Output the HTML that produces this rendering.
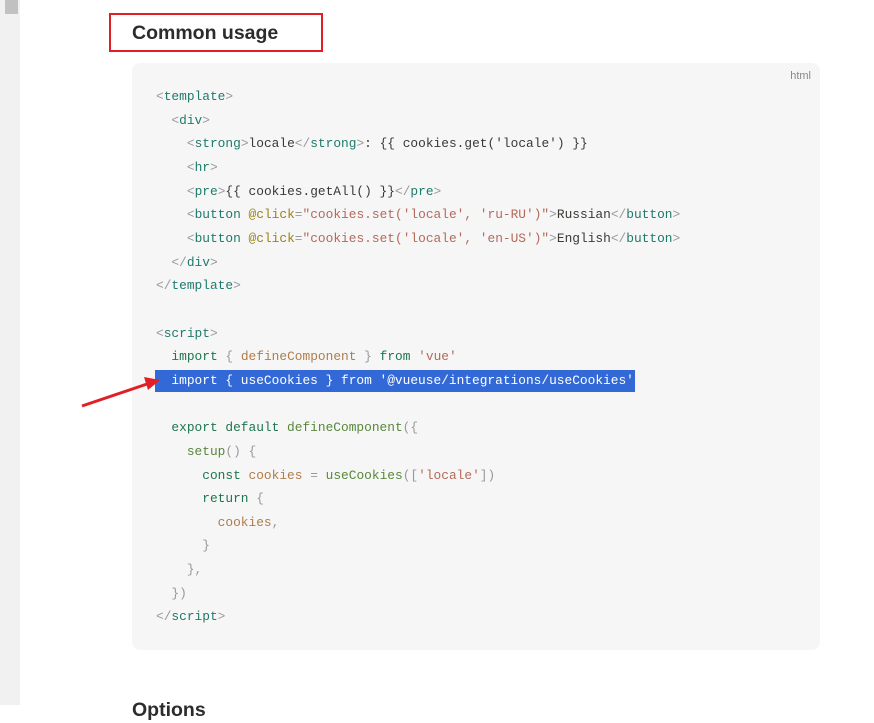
<!DOCTYPE html>
<html><head><meta charset="utf-8"><style>
body{margin:0;width:874px;height:705px;background:#fff;position:relative;overflow:hidden;font-family:"Liberation Sans",sans-serif}
.sb{position:absolute;left:0;top:0;width:20px;height:705px;background:#f1f1f1}
.th{position:absolute;left:5px;top:0;width:13px;height:14px;background:#c1c1c1}
.box{position:absolute;left:109px;top:13px;width:210px;height:35px;border:2px solid #e31e24}
h2{position:absolute;left:132px;top:20px;margin:0;font-size:19.5px;font-weight:600;color:#2c2c2c;line-height:26px}
h2.o{top:697px}
.code{position:absolute;left:132px;top:63px;width:688px;height:587px;background:#f6f6f7;border-radius:8px}
.lang{position:absolute;right:9px;top:7px;font-size:11px;color:#888}
pre{position:absolute;left:24px;top:22px;margin:0;font-family:"Liberation Mono",monospace;font-size:12.85px;line-height:23.65px;color:#393a34}
.p{color:#999}.t{color:#1e7a6c}.k{color:#1e754f}.s{color:#b56959}.a{color:#998418}.v{color:#b07d48}.f{color:#59873a}
.hl{background:#3369d6;color:#fff;display:inline-block;margin-left:-1px;padding:0 1px;line-height:22px}
</style></head><body>
<div class="sb"><div class="th"></div></div>
<div class="box"></div>
<h2>Common usage</h2>
<div class="code"><div class="lang">html</div>
<pre><span class="p">&lt;</span><span class="t">template</span><span class="p">&gt;</span>
  <span class="p">&lt;</span><span class="t">div</span><span class="p">&gt;</span>
    <span class="p">&lt;</span><span class="t">strong</span><span class="p">&gt;</span>locale<span class="p">&lt;/</span><span class="t">strong</span><span class="p">&gt;</span>: {{ cookies.get('locale') }}
    <span class="p">&lt;</span><span class="t">hr</span><span class="p">&gt;</span>
    <span class="p">&lt;</span><span class="t">pre</span><span class="p">&gt;</span>{{ cookies.getAll() }}<span class="p">&lt;/</span><span class="t">pre</span><span class="p">&gt;</span>
    <span class="p">&lt;</span><span class="t">button</span> <span class="a">@click</span><span class="p">=</span><span class="s">"cookies.set('locale', 'ru-RU')"</span><span class="p">&gt;</span>Russian<span class="p">&lt;/</span><span class="t">button</span><span class="p">&gt;</span>
    <span class="p">&lt;</span><span class="t">button</span> <span class="a">@click</span><span class="p">=</span><span class="s">"cookies.set('locale', 'en-US')"</span><span class="p">&gt;</span>English<span class="p">&lt;/</span><span class="t">button</span><span class="p">&gt;</span>
  <span class="p">&lt;/</span><span class="t">div</span><span class="p">&gt;</span>
<span class="p">&lt;/</span><span class="t">template</span><span class="p">&gt;</span>

<span class="p">&lt;</span><span class="t">script</span><span class="p">&gt;</span>
  <span class="k">import</span> <span class="p">{</span> <span class="v">defineComponent</span> <span class="p">}</span> <span class="k">from</span> <span class="s">'vue'</span>
<span class="hl">  import { useCookies } from '@vueuse/integrations/useCookies'</span>

  <span class="k">export default</span> <span class="f">defineComponent</span><span class="p">({</span>
    <span class="f">setup</span><span class="p">() {</span>
      <span class="k">const</span> <span class="v">cookies</span> <span class="p">=</span> <span class="f">useCookies</span><span class="p">([</span><span class="s">'locale'</span><span class="p">])</span>
      <span class="k">return</span> <span class="p">{</span>
        <span class="v">cookies</span><span class="p">,</span>
      <span class="p">}</span>
    <span class="p">},</span>
  <span class="p">})</span>
<span class="p">&lt;/</span><span class="t">script</span><span class="p">&gt;</span></pre></div>
<svg style="position:absolute;left:0;top:0" width="874" height="705"><line x1="82" y1="406" x2="150" y2="383" stroke="#e31e24" stroke-width="3"/><polygon points="160,380 144,377 148,390" fill="#e31e24"/></svg>
<h2 class="o">Options</h2>
</body></html>
